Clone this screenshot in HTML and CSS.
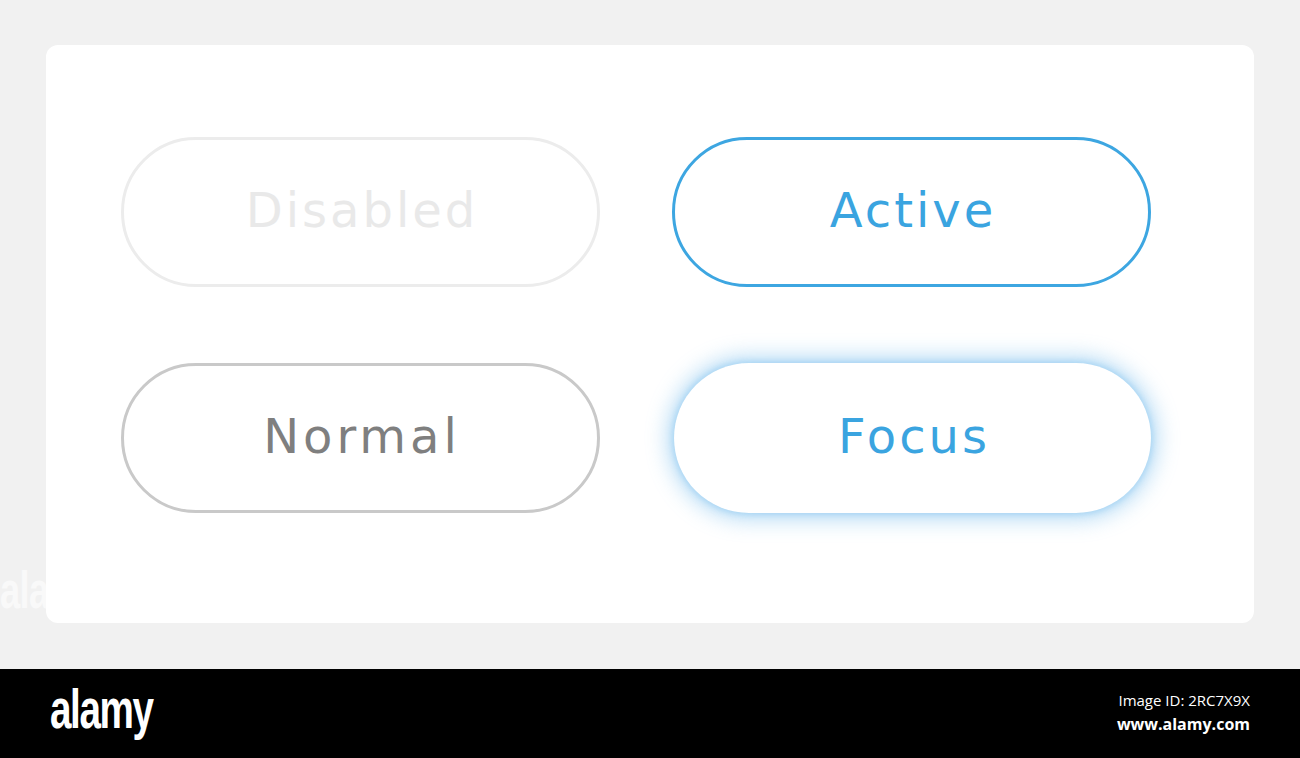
FILE: index.html
```html
<!DOCTYPE html>
<html>
<head>
<meta charset="utf-8">
<link rel="stylesheet" href="styles.css">
</head>
<body>
<div class="stage">
  <div class="watermark">ala</div>
  <div class="card">
    <div class="grid">
      <div class="btn disabled">Disabled</div>
      <div class="btn active">Active</div>
      <div class="btn normal">Normal</div>
      <div class="btn focus">Focus</div>
    </div>
  </div>
</div>
<div class="footer">
  <div class="logo">alamy</div>
  <div class="meta">
    <div class="imgid">Image ID: 2RC7X9X</div>
    <div class="site">www.alamy.com</div>
  </div>
</div>
</body>
</html>
```
FILE: styles.css
```css
html, body { margin: 0; padding: 0; }
body { background: #f1f1f1; font-family: "DejaVu Sans", "Noto Sans", sans-serif; width: 1300px; height: 758px; overflow: hidden; }
.stage { position: relative; height: 669px; box-sizing: border-box; padding: 45px 0 0 46px; }
.watermark { position: absolute; left: 0; top: 560px; font-family: "Liberation Sans Narrow", "Liberation Sans", sans-serif; font-weight: 700; font-size: 52px; color: #f9f9f9; letter-spacing: -1px; transform: scaleX(0.7); transform-origin: left center; }
.card { position: relative; width: 1208px; height: 578px; background: #fff; border-radius: 12px; box-sizing: border-box; padding: 92px 0 0 75px; }
.grid { display: grid; grid-template-columns: 479px 479px; grid-auto-rows: 150px; column-gap: 72px; row-gap: 76px; }
.btn { box-sizing: border-box; border: 3px solid transparent; border-radius: 75px; display: flex; align-items: center; justify-content: center; font-size: 48px; letter-spacing: 3px; padding-bottom: 5px; padding-left: 3px; }
.disabled { border-color: #ececec; color: #e9e9e9; }
.active { border-color: #3da6e1; color: #3aa4e0; }
.normal { border-color: #c9c9c9; color: #7f7f7f; letter-spacing: 4px; }
.focus { color: #3aa4e0; margin-left: 2px; box-shadow: 0 0 20px 8px rgba(100, 180, 235, 0.4), 0 0 6px 2px rgba(100, 180, 235, 0.35); }
.footer { height: 89px; background: #000; display: flex; align-items: center; justify-content: space-between; padding: 0 50px 0 50px; }
.logo { color: #fff; font-family: "Liberation Sans Narrow", "Liberation Sans", sans-serif; font-weight: 700; font-size: 56px; letter-spacing: -2px; transform: scaleX(0.69); transform-origin: left center; margin-top: -10px; }
.meta { display: flex; flex-direction: column; align-items: flex-end; gap: 3px; margin-top: -2px; }
.imgid { color: #fff; font-family: "Open Sans", "DejaVu Sans", sans-serif; font-size: 15px; }
.site { color: #fff; font-family: "Open Sans", "DejaVu Sans", sans-serif; font-weight: 700; font-size: 16px; }
```
